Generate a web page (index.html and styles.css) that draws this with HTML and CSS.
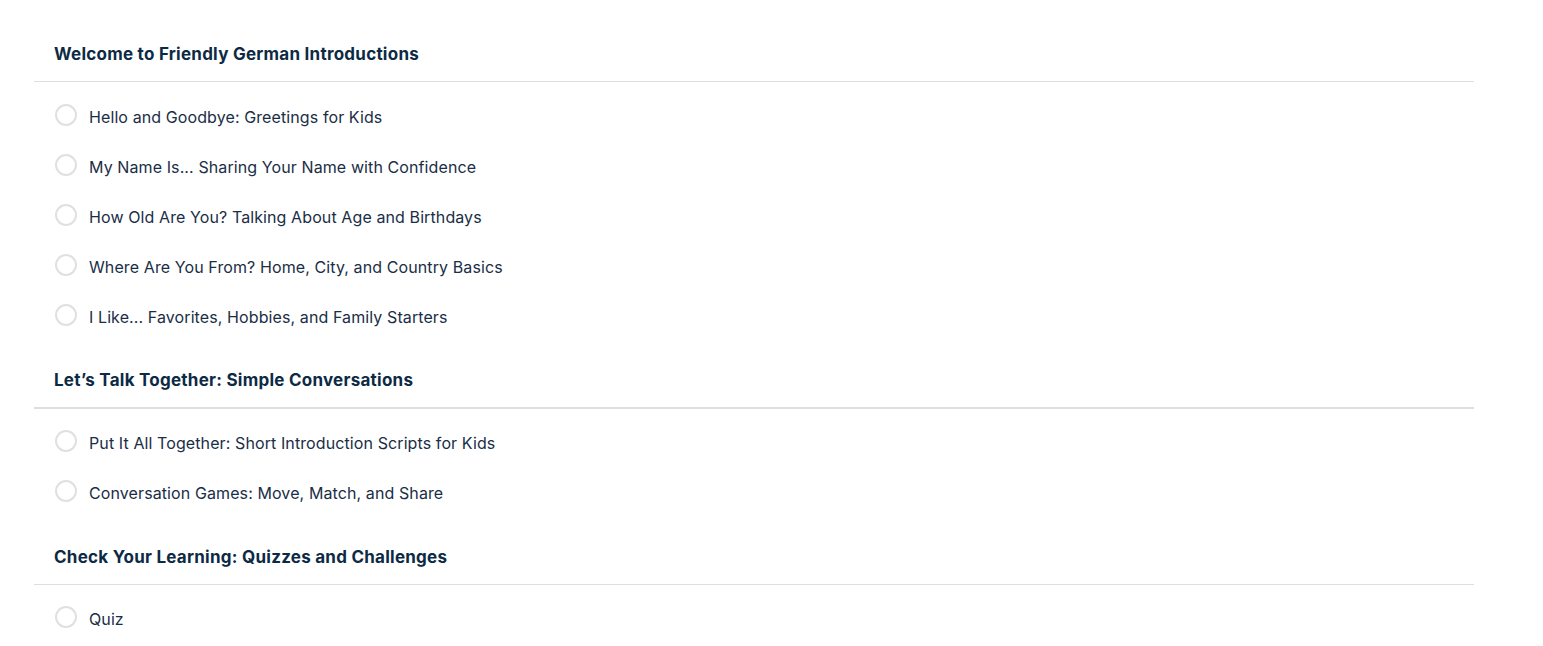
FILE: index.html
```html
<!DOCTYPE html>
<html>
<head>
<meta charset="utf-8">
<link rel="stylesheet" href="styles.css">
</head>
<body>
<div class="course">
  <section class="section">
    <h2 class="section-title">Welcome to Friendly German Introductions</h2>
    <ul class="lessons">
      <li class="lesson"><span class="check"></span><span class="label">Hello and Goodbye: Greetings for Kids</span></li>
      <li class="lesson"><span class="check"></span><span class="label">My Name Is... Sharing Your Name with Confidence</span></li>
      <li class="lesson"><span class="check"></span><span class="label">How Old Are You? Talking About Age and Birthdays</span></li>
      <li class="lesson"><span class="check"></span><span class="label">Where Are You From? Home, City, and Country Basics</span></li>
      <li class="lesson"><span class="check"></span><span class="label">I Like... Favorites, Hobbies, and Family Starters</span></li>
    </ul>
  </section>
  <section class="section section-thick">
    <h2 class="section-title">Let’s Talk Together: Simple Conversations</h2>
    <ul class="lessons">
      <li class="lesson"><span class="check"></span><span class="label">Put It All Together: Short Introduction Scripts for Kids</span></li>
      <li class="lesson"><span class="check"></span><span class="label">Conversation Games: Move, Match, and Share</span></li>
    </ul>
  </section>
  <section class="section section-last">
    <h2 class="section-title">Check Your Learning: Quizzes and Challenges</h2>
    <ul class="lessons">
      <li class="lesson"><span class="check"></span><span class="label">Quiz</span></li>
    </ul>
  </section>
</div>
</body>
</html>
```

FILE: styles.css
```css
html, body {
  margin: 0;
  padding: 0;
  background: #ffffff;
}
body {
  font-family: Inter, "Noto Sans", "Liberation Sans", sans-serif;
}
.course {
  width: 1440px;
  padding: 25px 0 0 34px;
}
.section-title {
  margin: 0;
  padding: 17px 20px 15px 20px;
  font-size: 17px;
  line-height: 24px;
  font-weight: 700;
  letter-spacing: 0.25px;
  color: #0d2a45;
  border-bottom: 1px solid #dedede;
}
.section-thick .section-title {
  border-bottom: 2px solid #dedede;
}
.lessons {
  list-style: none;
  margin: 0;
  padding: 10px 0 9px 0;
}
.section-thick .lessons {
  padding: 9px 0 10px 0;
}
.section-last .lessons {
  padding: 9px 0 10px 0;
}
.lesson {
  display: flex;
  align-items: center;
  height: 50px;
  padding-left: 21px;
  gap: 12px;
}
.check {
  width: 22px;
  height: 22px;
  box-sizing: border-box;
  border: 2px solid #e0e0e0;
  border-radius: 50%;
  flex: none;
  position: relative;
  top: -2px;
}
.label {
  font-size: 16px;
  letter-spacing: 0.1px;
  color: #1a2e46;
  line-height: 24px;
}
```
